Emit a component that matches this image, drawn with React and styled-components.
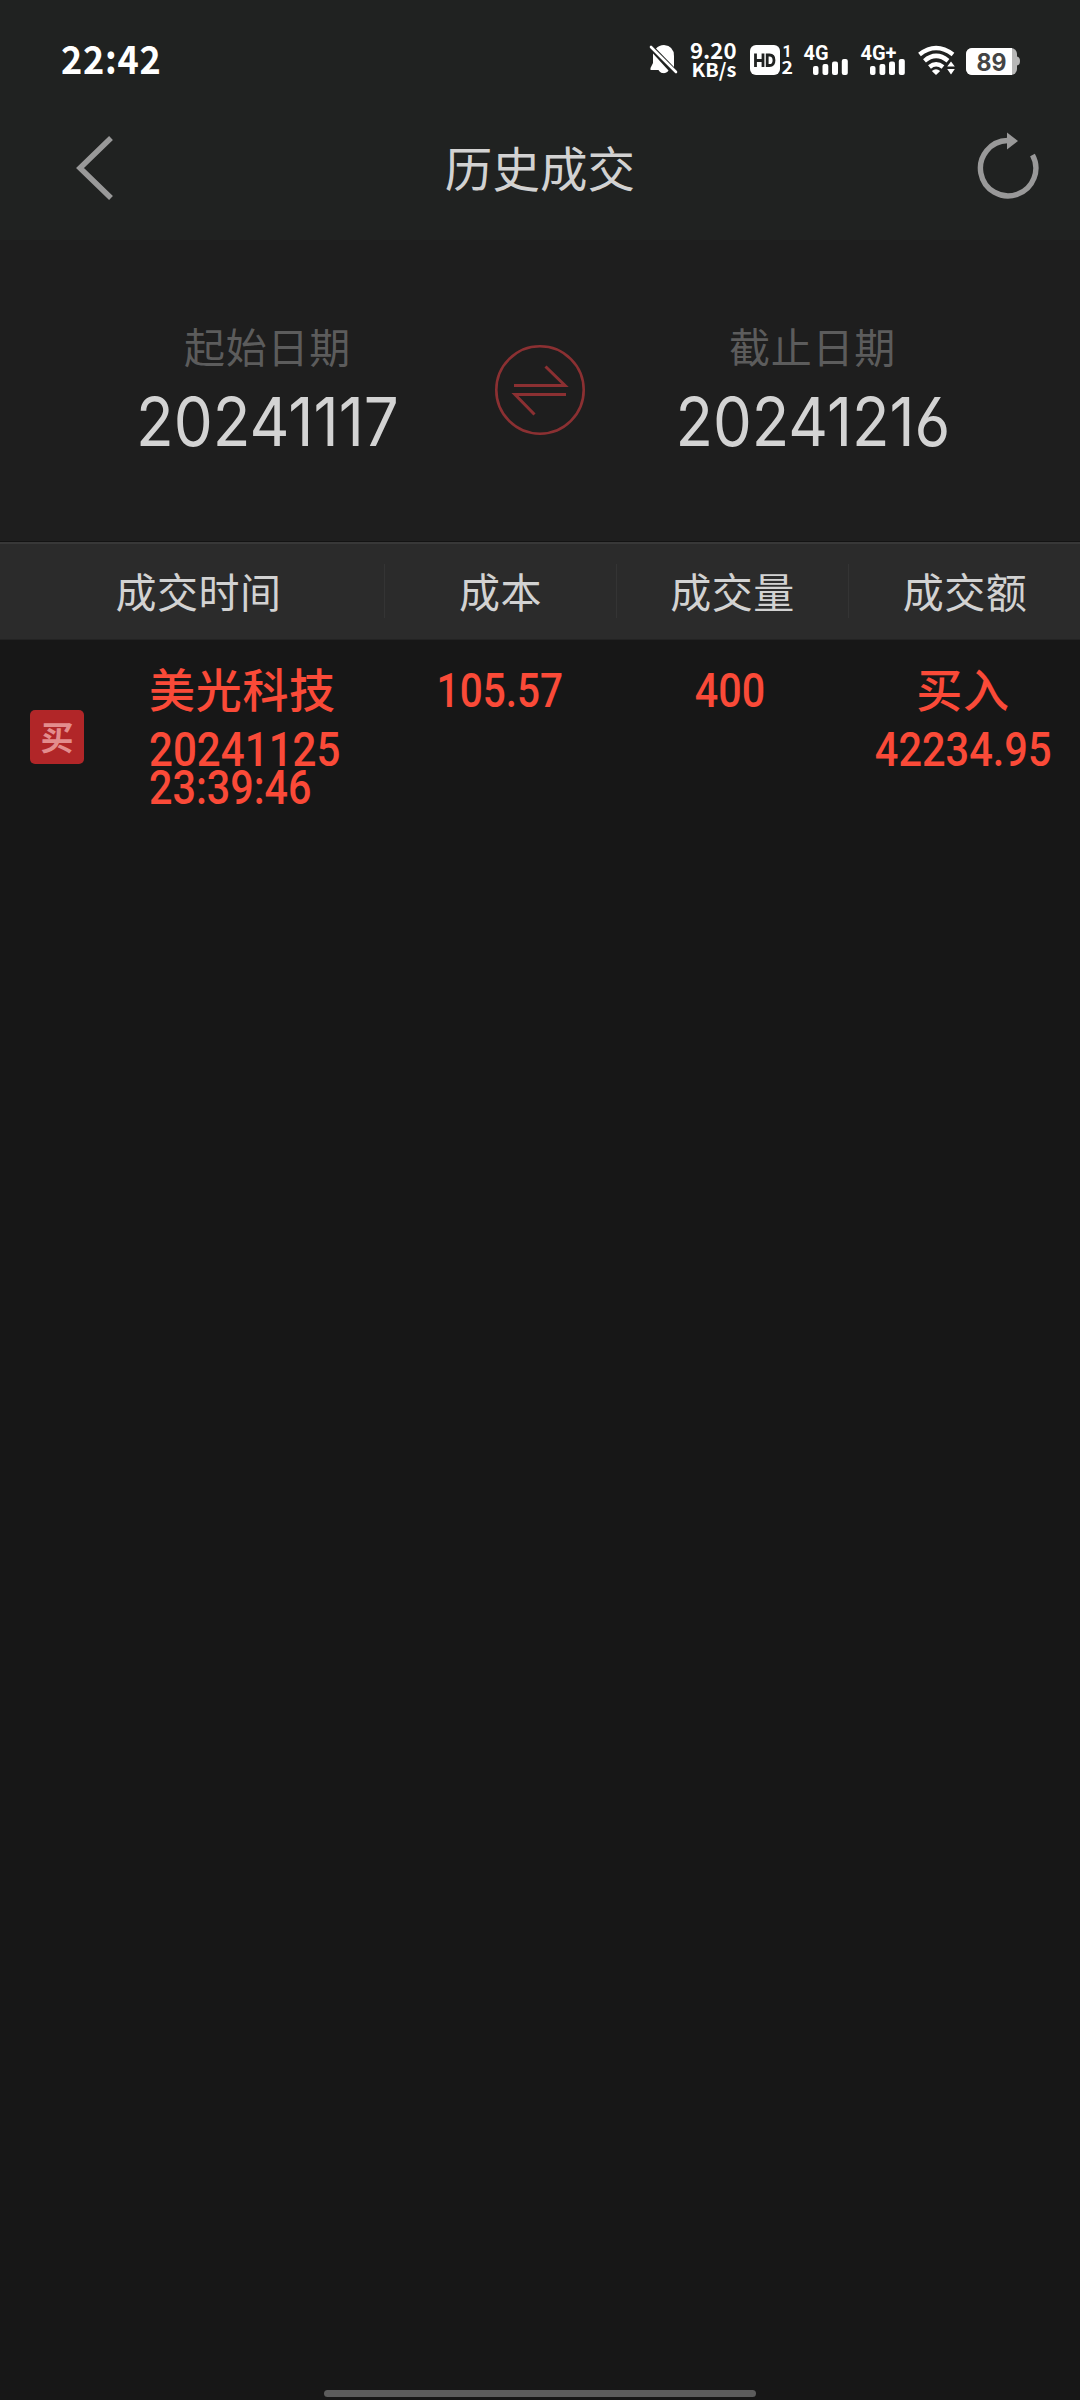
import React from "react";
import styled, { createGlobalStyle } from "styled-components";

const cjk = '"Noto Sans CJK SC", sans-serif';

const GlobalStyle = createGlobalStyle`
  * { box-sizing: border-box; }
  body { margin: 0; background: #171717; }
`;

const Screen = styled.div`
  display: flex;
  flex-direction: column;
  width: 1080px;
  height: 2400px;
  background: #171717;
  font-family: ${cjk};
  overflow: hidden;
`;

const TopArea = styled.div`
  height: 240px;
  background: #202221;
`;

const StatusBar = styled.div`
  display: flex;
  align-items: center;
  justify-content: space-between;
  height: 120px;
  padding: 0 59px 0 61px;
`;

const Clock = styled.div`
  margin-bottom: 6px;
  font-size: 39px;
  line-height: 60px;
  font-weight: 700;
  letter-spacing: 0.8px;
  color: #fff;
  transform: scaleX(0.925);
  transform-origin: left;
`;

const StatusIcons = styled.div`
  display: flex;
  align-items: center;
`;

const StatusGlyph = styled.svg`
  display: block;
  width: ${(p) => p.$w}px;
  height: 40px;
  margin-left: ${(p) => p.$gap || 0}px;
  overflow: visible;
  fill: #fff;
  font-family: ${(p) => p.$font || '"Noto Sans CJK SC"'}, sans-serif;
  font-weight: 700;
`;

const NavBar = styled.div`
  display: grid;
  grid-template-columns: 76px 1fr 76px;
  align-items: center;
  height: 96px;
  padding: 0 36px 0 70px;
`;

const NavIcon = styled.svg`
  display: block;
  width: 76px;
  height: 76px;
  fill: none;
  stroke: #999;
`;

const Title = styled.h1`
  margin: 0 34px 2px 0;
  font-size: 47.5px;
  line-height: 72px;
  font-weight: 400;
  letter-spacing: 0.1px;
  text-align: center;
  color: #d2d2d2;
`;

const DatePanel = styled.div`
  display: flex;
  justify-content: center;
  height: 301px;
  padding-top: 75px;
  background: #1e1e1e;
`;

const DateField = styled.div`
  display: flex;
  flex-direction: column;
  align-items: center;
  width: 455px;
`;

const DateLabel = styled.div`
  font-size: 41px;
  line-height: 60px;
  letter-spacing: 0.7px;
  color: #5c5c5c;
`;

const DateValue = styled.div`
  margin-top: 2px;
  font-family: Inter, sans-serif;
  font-size: 68px;
  line-height: 88px;
  font-weight: 400;
  font-feature-settings: "cv03", "cv04";
  color: #d3d3d3;
  transform: scaleX(${(p) => p.$squeeze});
`;

const SwapIcon = styled.svg`
  display: block;
  width: 90px;
  height: 90px;
  margin-top: 30px;
  fill: none;
  stroke: #8b3032;
`;

const HeadRow = styled.div`
  display: grid;
  grid-template-columns: 385px repeat(3, 232px);
  align-items: center;
  height: 99px;
  border-top: 1px solid #131313;
  border-bottom: 1px solid #232323;
  background: #2b2b2b;
  box-shadow: inset 0 2px 0 #383838;
`;

const HeadCell = styled.div`
  height: 54px;
  padding-left: ${(p) => p.$shift || 0}px;
  border-right: ${(p) => (p.$last ? "none" : "1px solid #343434")};
  font-size: 41px;
  line-height: 52px;
  letter-spacing: 0.5px;
  text-align: center;
  color: #d2d2d2;
`;

const Row = styled.div`
  display: grid;
  grid-template-columns: 149px 236px 231px 232px 232px;
  height: 180px;
  color: #fa4a38;
`;

const BadgeCell = styled.div`
  padding: 70px 0 0 30px;
`;

const Badge = styled.div`
  width: 54px;
  height: 54px;
  border-radius: 5px;
  background: #b12628;
  font-size: 33px;
  line-height: 53px;
  font-weight: 700;
  text-align: center;
  color: #e38d8d;
`;

const Cell = styled.div`
  display: flex;
  flex-direction: column;
  align-items: ${(p) => (p.$left ? "flex-start" : "center")};
  padding: 17px ${(p) => p.$right || 0}px 0 0;
`;

const Chinese = styled.div`
  height: 74px;
  font-size: 46px;
  line-height: 61px;
  font-weight: 500;
  letter-spacing: 0.7px;
  white-space: nowrap;
`;

const Digits = styled.div`
  height: ${(p) => p.$h || 38}px;
  font-family: Roboto, sans-serif;
  font-size: 48px;
  line-height: ${(p) => p.$h || 38}px;
  font-weight: 500;
  white-space: nowrap;
  transform: scaleX(${(p) => p.$squeeze || 0.86});
  transform-origin: ${(p) => (p.$left ? "left" : "center")};
`;

const HomeArea = styled.div`
  display: flex;
  justify-content: center;
  margin-top: auto;
  padding-bottom: 3px;
`;

const HomeBar = styled.div`
  width: 432px;
  height: 7px;
  border-radius: 4px;
  background: #5c5c5c;
`;

const BellOff = () => (
  <StatusGlyph $w={28} viewBox="650 40 28 40">
    <path d="M657 48.500 Q660 45 665 45 Q675 46 675 56 V67 Z" />
    <path d="M654 53.500 V63 L651.500 68 V70 H659.500 A5.800 5.800 0 0 0 669.500 70.500 Z" />
    <path d="M652 47 L677 72" stroke="#fff" strokeWidth="2.600" strokeLinecap="round" />
  </StatusGlyph>
);

const Speed = () => (
  <StatusGlyph $w={47} $gap={13} viewBox="690 40 47 40">
    <text x="690" y="59" fontSize="22.5" textLength="46.5" lengthAdjust="spacingAndGlyphs">9.20</text>
    <text x="691.5" y="77" fontSize="19" textLength="45" lengthAdjust="spacingAndGlyphs">KB/s</text>
  </StatusGlyph>
);

const HdBadge = () => (
  <StatusGlyph $w={44} $gap={12} viewBox="749 40 44 40">
    <rect x="750" y="45" width="30" height="30" rx="6" />
    <path d="M755.500 53.500 V67 M763 53.500 V67 M755.500 60.500 H763 M767.200 55 H769.500 Q774 55 774 60.200 Q774 65.500 769.500 65.500 H767.200 Z" fill="none" stroke="#202221" strokeWidth="2.800" />
    <text x="782.5" y="57" fontSize="16" fontFamily="Roboto">1</text>
    <text x="781.5" y="74" fontSize="17" textLength="11.5" lengthAdjust="spacingAndGlyphs">2</text>
  </StatusGlyph>
);

const Signal = ({ label, gap, labelWidth }) => (
  <StatusGlyph $w={45} $gap={gap} $font="Roboto" viewBox="803 40 45 40">
    <text x="803.5" y="59.5" fontSize="20.5" textLength={labelWidth} lengthAdjust="spacingAndGlyphs">{label}</text>
    <rect x="813" y="66" width="5.500" height="9" rx="2" />
    <rect x="822.500" y="64" width="5.800" height="11" rx="2" />
    <rect x="832" y="61.500" width="6" height="13.500" rx="2" />
    <rect x="841.800" y="59" width="6" height="16" rx="2" />
  </StatusGlyph>
);

const Wifi = () => (
  <StatusGlyph $w={38} $gap={12} viewBox="917 40 38 40">
    <g fill="none" stroke="#fff" strokeWidth="4.400">
      <path d="M919.500 54.500 Q936 41.500 953 54.500" />
      <path d="M924.500 60.800 Q936 51 948 60.800" />
      <path d="M929.500 67 Q936 61.500 943 67" />
    </g>
    <path d="M936 75 L931.800 71 Q936 67.500 940.200 71 Z" />
    <path d="M951 61.500 L954.800 66.500 H947.200 Z M951 74.500 L954.800 69 H947.200 Z" />
  </StatusGlyph>
);

const Battery = () => (
  <StatusGlyph $w={55} $gap={11} $font="Inter" viewBox="966 40 55 40">
    <rect x="966" y="48" width="51" height="27" rx="6" fill="#b7b7b7" />
    <path d="M972 48 H1012 V75 H972 A6 6 0 0 1 966 69 V54 A6 6 0 0 1 972 48 Z" />
    <path d="M1017 56.500 Q1020 57 1020 61 Q1020 65 1017 65.500 Z" fill="#b7b7b7" />
    <text x="976.5" y="70.5" fontSize="24" fill="#444" textLength="30" lengthAdjust="spacingAndGlyphs">89</text>
  </StatusGlyph>
);

const records = [
  { side: "买", name: "美光科技", date: "20241125", time: "23:39:46", cost: "105.57", volume: "400", action: "买入", amount: "42234.95" },
];

export default function App() {
  return (
    <Screen>
      <GlobalStyle />
      <TopArea>
        <StatusBar>
          <Clock>22:42</Clock>
          <StatusIcons>
            <BellOff />
            <Speed />
            <HdBadge />
            <Signal label="4G" gap={10} labelWidth={25} />
            <Signal label="4G+" gap={12} labelWidth={36} />
            <Wifi />
            <Battery />
          </StatusIcons>
        </StatusBar>
        <NavBar>
          <NavIcon viewBox="70 130 76 76">
            <path d="M111 138 L80 168 L111 198" strokeWidth="5.500" />
          </NavIcon>
          <Title>历史成交</Title>
          <NavIcon viewBox="969 130 76 76">
            <path d="M1008.500 140.500 A27.700 27.700 0 1 0 1033.500 155" strokeWidth="5.400" />
            <path d="M1008 132.500 L1019 141 L1008 149.500 Z" fill="#999" stroke="none" />
          </NavIcon>
        </NavBar>
      </TopArea>
      <DatePanel>
        <DateField>
          <DateLabel>起始日期</DateLabel>
          <DateValue $squeeze={0.91}>20241117</DateValue>
        </DateField>
        <SwapIcon viewBox="495 345 90 90">
          <circle cx="540" cy="390" r="43.700" strokeWidth="2.600" />
          <path d="M514 385.500 H565 L545.500 366.500 M566 394.500 H515 L534.500 414.500" strokeWidth="3" />
        </SwapIcon>
        <DateField>
          <DateLabel>截止日期</DateLabel>
          <DateValue $squeeze={0.905}>20241216</DateValue>
        </DateField>
      </DatePanel>
      <HeadRow>
        <HeadCell $shift={13}>成交时间</HeadCell>
        <HeadCell>成本</HeadCell>
        <HeadCell>成交量</HeadCell>
        <HeadCell $last>成交额</HeadCell>
      </HeadRow>
      {records.map((r) => (
        <Row key={r.date + r.time}>
          <BadgeCell>
            <Badge>{r.side}</Badge>
          </BadgeCell>
          <Cell $left>
            <Chinese>{r.name}</Chinese>
            <Digits $left $squeeze={0.877}>{r.date}</Digits>
            <Digits $left>{r.time}</Digits>
          </Cell>
          <Cell $right={2}>
            <Digits $h={68} $squeeze={0.845}>{r.cost}</Digits>
          </Cell>
          <Cell $right={5}>
            <Digits $h={68}>{r.volume}</Digits>
          </Cell>
          <Cell $right={2}>
            <Chinese>{r.action}</Chinese>
            <Digits $squeeze={0.865}>{r.amount}</Digits>
          </Cell>
        </Row>
      ))}
      <HomeArea>
        <HomeBar />
      </HomeArea>
    </Screen>
  );
}
